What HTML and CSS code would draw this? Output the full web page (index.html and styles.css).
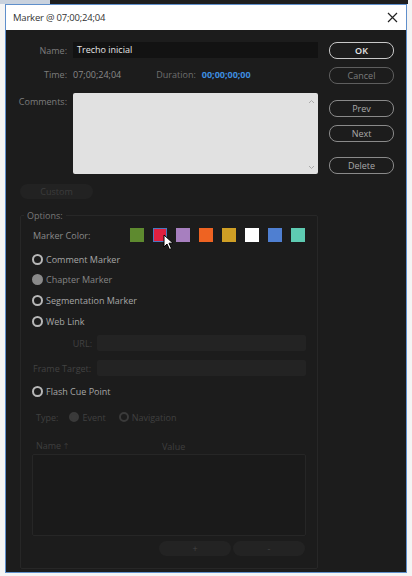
FILE: index.html
```html
<!DOCTYPE html>
<html>
<head>
<meta charset="utf-8">
<link rel="stylesheet" href="styles.css">
</head>
<body>
<div class="topstrip"><div class="tl"></div><div class="tr"></div></div>
<div class="window">
  <div class="titlebar">
    <span class="title">Marker @ 07;00;24;04</span>
    <svg class="close" width="11" height="11" viewBox="0 0 11 11"><path d="M1 1L10 10M10 1L1 10" stroke="#222" stroke-width="1.2" fill="none"/></svg>
  </div>
  <div class="body">
    <div class="top">
      <div class="form">
        <div class="row name-row">
          <span class="lbl">Name:</span>
          <div class="name-input">Trecho inicial</div>
        </div>
        <div class="row time-row">
          <span class="lbl">Time:</span>
          <span class="time-val">07;00;24;04</span>
          <span class="dur-lbl">Duration:</span>
          <span class="dur-val">00;00;00;00</span>
        </div>
        <div class="row comments-row">
          <span class="lbl lbl-top">Comments:</span>
          <div class="textarea">
            <div class="scroll">
              <svg width="7" height="5" viewBox="0 0 7 5"><path d="M1 4L3.5 1.5L6 4" stroke="#aaa" fill="none"/></svg>
              <svg width="7" height="5" viewBox="0 0 7 5"><path d="M1 1L3.5 3.5L6 1" stroke="#aaa" fill="none"/></svg>
            </div>
          </div>
        </div>
      </div>
      <div class="buttons">
        <div class="btn btn-ok">OK</div>
        <div class="btn btn-dis btn-cancel">Cancel</div>
        <div class="btn btn-mid btn-prev">Prev</div>
        <div class="btn btn-mid btn-next">Next</div>
        <div class="btn btn-mid btn-delete">Delete</div>
      </div>
    </div>
    <div class="custom">Custom</div>
    <fieldset class="options">
      <legend>Options:</legend>
      <div class="color-row">
        <span class="mc-lbl">Marker Color:</span>
        <div class="swatches">
          <span class="sw" style="background:#5e8a2f"></span>
          <span class="sw sel" style="background:#df2040"></span>
          <span class="sw" style="background:#a77fbf"></span>
          <span class="sw" style="background:#ee6322"></span>
          <span class="sw" style="background:#cf9f25"></span>
          <span class="sw" style="background:#ffffff"></span>
          <span class="sw" style="background:#4f7fd1"></span>
          <span class="sw" style="background:#5ecbb2"></span>
          <svg class="cursor" width="11" height="17" viewBox="0 0 11 17"><path d="M1 1L1 13L4 10L6.5 15.5L8.5 14.5L6 9.2L10 9.2Z" fill="#fff" stroke="#000" stroke-width="1"/></svg>
        </div>
      </div>
      <div class="radio r1"><span class="rc"></span>Comment Marker</div>
      <div class="radio r2 dim"><span class="rc filled"></span>Chapter Marker</div>
      <div class="radio r3"><span class="rc"></span>Segmentation Marker</div>
      <div class="radio r4"><span class="rc"></span>Web Link</div>
      <div class="field url-row"><span class="flbl">URL:</span><div class="finput"></div></div>
      <div class="field ft-row"><span class="flbl">Frame Target:</span><div class="finput"></div></div>
      <div class="radio r5"><span class="rc"></span>Flash Cue Point</div>
      <div class="type-row">
        <span class="type-lbl">Type:</span>
        <span class="trc filled"></span><span class="tt">Event</span>
        <span class="trc nav"></span><span class="tt">Navigation</span>
      </div>
      <div class="list-head"><span class="h-name">Name <span class="arrow">&#x1F851;</span></span><span class="h-val">Value</span></div>
      <div class="list"></div>
      <div class="list-btns"><div class="lb">+</div><div class="lb">-</div></div>
    </fieldset>
  </div>
</div>
</body>
</html>
```
FILE: styles.css
```css
html, body { margin: 0; padding: 0; }
body {
  width: 412px; height: 576px; overflow: hidden;
  background: #f4f4f4;
  font-family: "Open Sans", "Noto Sans", sans-serif;
  font-size: 9px;
}
.topstrip { display: flex; height: 4px; }
.tl { width: 50px; background: #c9d2de; }
.tr { flex: 1; background: #1f1f1f; margin-right: 4px; }
.window {
  margin-left: 5px; width: 400px; height: 567px;
  border: 1px solid #5f8fcb;
  display: flex; flex-direction: column;
  box-sizing: content-box;
}
.titlebar {
  height: 25px; background: #fff;
  display: flex; align-items: center; justify-content: space-between;
  padding: 0 7px 0 7px;
}
.title { font-family: "Open Sans", sans-serif; font-size: 9.5px; color: #333; letter-spacing: -0.2px; }
.close { margin-right: 1px; }
.body { flex: 1; background: #1c1c1c; display: flex; flex-direction: column; padding: 12px 0 0 0; position: relative; }
.top { display: flex; }
.form { width: 312px; display: flex; flex-direction: column; }
.row { display: grid; grid-template-columns: 61px 1fr; column-gap: 6px; align-items: center; }
.lbl { text-align: right; color: #7d7d7d; }
.lbl-top { align-self: start; padding-top: 2px; }
.name-row { height: 16px; }
.name-input { height: 16px; background: #121212; color: #e6e6e6; line-height: 16px; padding-left: 4px; }
.time-row { height: 16px; margin-top: 8px; grid-template-columns: 61px auto auto 1fr; }
.time-val { color: #8a8a8a; }
.dur-lbl { color: #6f6f6f; margin-left: 29px; }
.dur-val { color: #3e8ee0; font-weight: 700; margin-left: 0; }
.comments-row { margin-top: 11px; align-items: start; }
.textarea { height: 81px; background: #e1e1e1; border-radius: 2px; display: flex; justify-content: flex-end; }
.scroll { width: 14px; display: flex; flex-direction: column; justify-content: space-between; align-items: center; padding: 6px 0 4px; box-sizing: border-box; }
.buttons { margin-left: 11px; width: 65px; display: flex; flex-direction: column; }
.btn {
  height: 15px; border: 1px solid #c8c8c8; border-radius: 8px;
  color: #e8e8e8; text-align: center; line-height: 15px; box-sizing: content-box;
}
.btn-ok { font-weight: 600; }
.btn-dis { border-color: #5e5e5e; color: #7b7b7b; margin-top: 8px; }
.btn-mid { border-color: #8a8a8a; color: #a9a9a9; }
.btn-prev { margin-top: 16px; }
.btn-next { margin-top: 8px; }
.btn-delete { margin-top: 15px; }
.custom {
  margin: 10px 0 0 14px; width: 73px; height: 15px; border-radius: 8px;
  background: #222; color: #3c3c3c; text-align: center; line-height: 15px;
}
.options {
  margin: 10px 0 0 14px; width: 298px; height: 360px; box-sizing: border-box;
  border: 1px solid #272727; border-radius: 2px; padding: 0; position: relative;
  display: flex; flex-direction: column;
}
.options legend { color: #787878; padding: 0 3px 0 3px; margin-left: 3px; font-size: 9px; }
.color-row { display: flex; align-items: center; margin: 6px 0 0 12px; height: 14px; }
.mc-lbl { color: #8a8a8a; width: 97px; }
.swatches { display: flex; gap: 9px; position: relative; }
.sw { width: 14px; height: 14px; display: block; box-sizing: border-box; }
.sw.sel { border: 1px solid #4a78c0; }
.cursor { position: absolute; left: 33px; top: 6px; }
.radio { display: flex; align-items: center; color: #a6a6a6; margin-left: 11px; height: 12px; }
.rc { width: 11px; height: 11px; border: 2px solid #b8b8b8; border-radius: 50%; box-sizing: border-box; margin-right: 3px; }
.rc.filled { background: #8a8a8a; border-color: #8a8a8a; }
.dim { color: #858585; }
.r1 { margin-top: 11px; }
.r2 { margin-top: 8px; }
.r3 { margin-top: 9px; }
.r4 { margin-top: 9px; }
.field { display: flex; align-items: center; height: 16px; margin-left: 12px; }
.flbl { width: 59px; text-align: right; color: #424242; margin-right: 5px; white-space: nowrap; }
.ft-row .flbl { text-align: left; }
.finput { width: 209px; height: 16px; background: #232323; border-radius: 2px; }
.url-row { margin-top: 8px; }
.ft-row { margin-top: 9px; }
.r5 { margin-top: 9px; }
.type-row { display: flex; align-items: center; margin: 14px 0 0 15px; height: 12px; color: #404040; }
.type-lbl { margin-right: 11px; }
.trc { width: 10px; height: 10px; border-radius: 50%; box-sizing: border-box; border: 2px solid #3a3a3a; margin-right: 3px; }
.trc.filled { background: #3a3a3a; }
.trc.nav { margin-left: 13px; }
.list-head { display: flex; margin: 18px 0 0 15px; color: #3f3f3f; height: 10px; align-items: center; }
.h-name { width: 126px; }
.arrow { font-size: 8px; }
.list { margin: 3px 0 0 11px; width: 274px; height: 82px; box-sizing: border-box; background: #1a1a1a; border: 1px solid #262626; border-radius: 2px; }
.list-btns { display: flex; gap: 2px; margin: 5px 0 0 138px; }
.lb { width: 72px; height: 15px; border-radius: 8px; background: #232323; color: #444; text-align: center; line-height: 15px; }
```
